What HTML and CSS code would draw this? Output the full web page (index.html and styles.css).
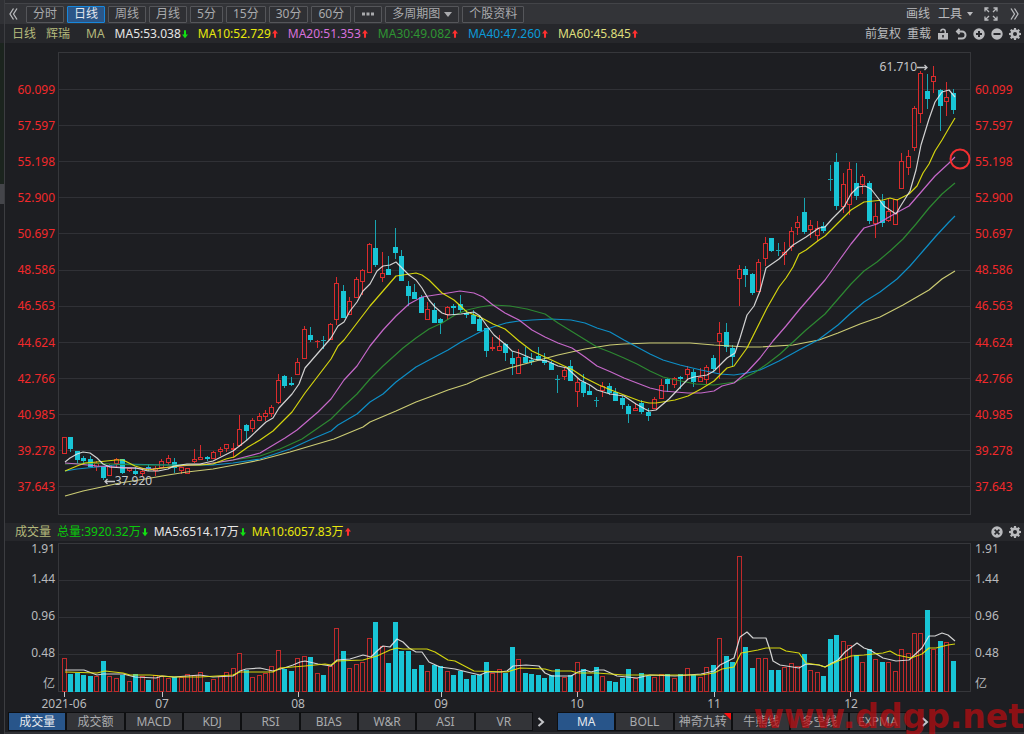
FILE: index.html
```html
<!DOCTYPE html>
<html lang="zh-CN">
<head>
<meta charset="utf-8">
<title>辉瑞 日线</title>
<link rel="stylesheet" href="styles.css">
</head>
<body>
<svg class="defs" aria-hidden="true">
  <symbol id="up" viewBox="0 0 7 11"><path d="M3.5 0.5 7 5H4.7v5H2.3V5H0z"/></symbol>
  <symbol id="down" viewBox="0 0 7 11"><path d="M3.5 10.5 7 6H4.7V1H2.3v5H0z"/></symbol>
  <symbol id="gear" viewBox="0 0 12 12"><path fill-rule="evenodd" d="M5 0h2l.3 1.7.9.4L9.600 1 11 2.400 9.900 3.800l.4.9L12 5v2l-1.700.3-.4.9L11 9.600 9.600 11 8.200 9.900l-.9.4L7 12H5l-.3-1.700-.9-.4L2.400 11 1 9.600l1.100-1.400-.4-.9L0 7V5l1.700-.3.4-.9L1 2.400 2.400 1l1.400 1.100.9-.4zM6 4a2 2 0 1 0 0 4 2 2 0 0 0 0-4z"/></symbol>
</svg>
<div class="app">
  <aside class="rail" id="rail"></aside>
  <main class="panel">
    <nav class="toolbar">
      <button class="bare" aria-label="收起"><svg width="9" height="12" viewBox="0 0 9 12"><path class="stroke" d="M4.500.5 1 6l3.500 5.500M8 .5 4.500 6 8 11.500"/></svg></button>
      <div class="periods">
        <button>分时</button>
        <button class="on">日线</button>
        <button>周线</button>
        <button>月线</button>
        <button>5分</button>
        <button>15分</button>
        <button>30分</button>
        <button>60分</button>
        <button class="more" aria-label="更多"><svg width="12" height="4" viewBox="0 0 12 4"><path d="M0 .5h3v3H0zM4.500.5h3v3h-3zM9 .5h3v3H9z"/></svg></button>
        <button>多周期图<svg class="caret" width="8" height="5" viewBox="0 0 8 5"><path d="M0 0h8L4 5z"/></svg></button>
        <button>个股资料</button>
      </div>
      <div class="tools">
        <button class="bare">画线</button>
        <button class="bare">工具<svg class="caret" width="6" height="4" viewBox="0 0 6 4"><path d="M0 0h6L3 4z"/></svg></button>
        <button class="bare full" aria-label="全屏"><svg width="14" height="14" viewBox="0 0 14 14"><path class="stroke" d="M1 4.500V1h3.500M1 1l4 4M9.500 1H13v3.500M13 1 9 5M1 9.500V13h3.500M1 13l4-4M13 9.500V13H9.500M13 13 9 9"/></svg></button>
        <button class="bare" aria-label="展开"><svg width="9" height="12" viewBox="0 0 9 12"><path class="stroke" d="M1 .5 4.500 6 1 11.500M4.500.5 8 6l-3.500 5.500"/></svg></button>
      </div>
    </nav>
    <header class="legend">
      <span class="olive">日线</span><span class="olive">辉瑞</span><span class="olive ma">MA</span>
      <span class="white">MA5:53.038<svg class="arr fall"><use href="#down"/></svg></span>
      <span class="yellow">MA10:52.729<svg class="arr rise"><use href="#up"/></svg></span>
      <span class="pink">MA20:51.353<svg class="arr rise"><use href="#up"/></svg></span>
      <span class="green">MA30:49.082<svg class="arr rise"><use href="#up"/></svg></span>
      <span class="blue">MA40:47.260<svg class="arr rise"><use href="#up"/></svg></span>
      <span class="khaki">MA60:45.845<svg class="arr rise"><use href="#up"/></svg></span>
      <div class="actions">
        <button class="bare">前复权</button>
        <button class="bare">重载</button>
        <button class="bare icon" aria-label="锁定"><svg width="12" height="12" viewBox="0 0 12 12"><path fill-rule="evenodd" d="M1 5h6.500V3.500a1.500 1.500 0 0 0-3 0H3a3 3 0 0 1 6 0V5h2v6.500H1zM5.200 7v2.500h1.600V7z"/></svg></button>
        <button class="bare icon" aria-label="撤销"><svg width="12" height="12" viewBox="0 0 12 12"><path class="thick" d="M4.500 1 2 3.500 4.500 6M2 3.500h5a3.500 3.500 0 0 1 0 7H3"/></svg></button>
        <button class="bare icon" aria-label="放大"><svg width="12" height="12" viewBox="0 0 12 12"><path fill-rule="evenodd" d="M6 .3a5.700 5.700 0 1 0 0 11.400A5.700 5.700 0 0 0 6 .3zM5 3h2v2h2v2H7v2H5V7H3V5h2z"/></svg></button>
        <button class="bare icon" aria-label="缩小"><svg width="12" height="12" viewBox="0 0 12 12"><path fill-rule="evenodd" d="M6 .3a5.700 5.700 0 1 0 0 11.400A5.700 5.700 0 0 0 6 .3zM2.500 5h7v2h-7z"/></svg></button>
        <button class="bare icon" aria-label="设置"><svg width="12" height="12"><use href="#gear"/></svg></button>
      </div>
    </header>
    <section class="chart price">
      <ol class="scale left" data-scale="price"></ol>
      <div class="plot">
        <svg id="price" viewBox="58 52 913 463" preserveAspectRatio="none"></svg>
        <span class="note high">61.710<svg width="11" height="7" viewBox="0 0 11 7"><path class="stroke" d="M0 3.500h10M7.500 1 10 3.500 7.500 6"/></svg></span>
        <span class="note low"><svg width="11" height="7" viewBox="0 0 11 7"><path class="stroke" d="M11 3.500H1M3.500 1 1 3.500 3.500 6"/></svg>37.920</span>
      </div>
      <ol class="scale" data-scale="price"></ol>
    </section>
    <header class="legend volbar">
      <span class="olive">成交量</span>
      <span class="lime">总量:3920.32万<svg class="arr fall"><use href="#down"/></svg></span>
      <span class="white">MA5:6514.17万<svg class="arr fall"><use href="#down"/></svg></span>
      <span class="yellow">MA10:6057.83万<svg class="arr rise"><use href="#up"/></svg></span>
      <div class="actions">
        <button class="bare icon" aria-label="关闭"><svg width="12" height="12" viewBox="0 0 12 12"><path fill-rule="evenodd" d="M6 .3a5.700 5.700 0 1 0 0 11.400A5.700 5.700 0 0 0 6 .3zM4.200 3 6 4.800 7.800 3 9 4.200 7.200 6 9 7.800 7.800 9 6 7.200 4.200 9 3 7.800 4.800 6 3 4.200z"/></svg></button>
        <button class="bare icon" aria-label="设置"><svg width="12" height="12"><use href="#gear"/></svg></button>
      </div>
    </header>
    <section class="chart volume">
      <ol class="scale left" data-scale="volume"></ol>
      <div class="plot"><svg id="volume" viewBox="58 543 913 154" preserveAspectRatio="none"></svg></div>
      <ol class="scale" data-scale="volume"></ol>
    </section>
    <div class="months">
      <span>2021-06</span><span>07</span><span>08</span><span>09</span><span>10</span><span>11</span><span>12</span>
    </div>
    <nav class="tabs">
      <div class="group nine">
        <button class="on">成交量</button><button>成交额</button><button>MACD</button><button>KDJ</button><button>RSI</button><button>BIAS</button><button>W&amp;R</button><button>ASI</button><button>VR</button>
      </div>
      <button class="bare next" aria-label="更多指标"><svg width="8" height="10" viewBox="0 0 8 10"><path class="thick" d="M1.500 1 6 5 1.500 9"/></svg></button>
      <div class="group six">
        <button class="on">MA</button><button>BOLL</button><button class="hot">神奇九转</button><button>牛熊线</button><button>多空线</button><button>EXPMA</button>
      </div>
      <button class="bare next last" aria-label="更多主图指标"><svg width="8" height="10" viewBox="0 0 8 10"><path class="thick" d="M1.500 1 6 5 1.500 9"/></svg></button>
    </nav>
    <div class="watermark">www.ddgp.net</div>
  </main>
</div>
<script src="chart.js"></script>
</body>
</html>
```
FILE: styles.css
```css
* { box-sizing: border-box; }
body {
  margin: 0;
  background: #1d1e22;
  color: #b9babd;
  font: 12px/16px "Noto Sans", "Noto Sans CJK SC", sans-serif;
}
button {
  font: inherit;
  color: #a9aaad;
  background: none;
  border: 0;
  padding: 0;
  display: flex;
  align-items: center;
  justify-content: center;
  white-space: nowrap;
}
ol { list-style: none; margin: 0; padding: 0; }
svg { display: block; fill: currentColor; flex: none; }
.defs { position: absolute; width: 0; height: 0; }
.stroke { fill: none; stroke: currentColor; stroke-width: 1.3; }
.thick { fill: none; stroke: currentColor; stroke-width: 2; }

.app { display: flex; height: 100vh; min-height: 480px; }
.rail {
  width: 5px;
  border-right: 1px solid #3c3d41;
  background: linear-gradient(#303135 0 24px, #26272b 24px 43px, #1b241e 43px 184px, #44454a 184px 204px, #1d1e22 204px);
}
.panel {
  flex: 1;
  min-width: 0;
  position: relative;
  display: flex;
  flex-direction: column;
}

.toolbar {
  height: 24px;
  flex: none;
  display: flex;
  align-items: center;
  gap: 8px;
  padding: 3px 5px 2px 4px;
  border-top: 3px solid #2c2d31;
  background: #333438;
  box-shadow: inset 0 1px #434448;
}
.toolbar .bare { color: #b9babd; }
.periods { display: flex; gap: 3px; }
.periods button {
  height: 17px;
  padding: 0 6px;
  border: 1px solid #55565a;
  border-radius: 1px;
  background: #2f3034;
}
.periods .on { background: #2b5688; border-color: #1787dc; color: #e4e8ee; }
.periods .more { width: 28px; }
.periods .caret { margin-left: 4px; }
.tools { margin-left: auto; display: flex; align-items: center; gap: 8px; }
.tools .caret { margin-left: 5px; }
.full { margin: 0 4px 0 3px; }

.legend {
  height: 19px;
  flex: none;
  display: flex;
  align-items: center;
  gap: 10px;
  padding: 0 3px 0 7px;
  background: #26272b;
  white-space: nowrap;
}
.legend span { display: flex; align-items: center; }
.legend .ma { margin: 0 0 0 6px; }
.volbar { height: 18px; gap: 6px; padding-left: 10px; }
.arr { width: 6px; height: 10px; margin-left: 1px; }
.rise { color: #ff2f2f; }
.fall { color: #12e012; }
.olive { color: #b4b97c; }
.white { color: #e6e6e6; }
.yellow { color: #e8e80c; }
.pink { color: #d870dc; }
.green { color: #2f9433; }
.blue { color: #0c9ad8; }
.khaki { color: #dede7c; }
.lime { color: #0bc80b; }
.actions { margin-left: auto; display: flex; align-items: center; gap: 6px; }
.actions .bare { color: #b9babd; }

.chart { display: flex; min-height: 0; }
.plot { flex: 1; min-width: 0; position: relative; }
.plot > svg { width: 100%; height: 100%; }
.scale { width: 53px; padding-left: 4px; }
.left { text-align: right; padding: 0 3px 0 0; }
.price { flex: 463 1 0; padding: 9px 0 8px; }
.price .scale {
  display: flex;
  flex-direction: column;
  justify-content: space-between;
  padding-top: 30px;
  padding-bottom: 20px;
  color: #f2292b;
}
.volume { flex: 156 1 0; }
.volume .plot { padding-top: 2px; }
.volume .scale { display: grid; grid-template-rows: 30fr 37fr 37fr 31fr 21fr; }
.note {
  position: absolute;
  display: flex;
  align-items: center;
  color: #c4c5c8;
}
.high { right: 4.7%; top: 1.6%; }
.low { left: 5%; top: 91%; }

.months {
  height: 15px;
  flex: none;
  display: grid;
  grid-template-columns: 98fr 136fr 143fr 136fr 137fr 137fr 120fr;
  padding: 0 53px 0 59px;
  line-height: 14px;
}
.months span { justify-self: start; transform: translateX(-50%); }

.tabs {
  height: 22px;
  flex: none;
  display: flex;
  align-items: flex-start;
  padding: 0 81px 0 3px;
  border-bottom: 2px solid #303135;
}
.group { display: flex; background: #0e0f11; }
.nine { flex: 9 1 0; }
.six { flex: 6 1 0; }
.group button {
  flex: 1 1 0;
  min-width: 0;
  height: 19px;
  border: 1px solid #0e0f11;
  background: #333438;
  position: relative;
}
.group .on { background: #28558a; color: #e4e8ee; }
.hot::after {
  content: "";
  position: absolute;
  top: 0;
  right: 0;
  border: solid transparent;
  border-width: 0 7px 7px 0;
  border-right-color: #ff1010;
}
.next { width: 24px; height: 19px; color: #c4c5c8; padding-right: 9px; }
.last { width: 40px; margin-right: -4px; padding: 0 5px 0 0; }
.watermark {
  position: absolute;
  right: 0;
  bottom: 0;
  color: #bd0c10;
  opacity: .7;
  font: bold 33px/34px "DejaVu Sans", sans-serif;
  pointer-events: none;
}

.grid { stroke: #303136; }
.frame { fill: none; stroke: #36373b; }
.tick { stroke: #c4c5c8; }
.r { fill: #1d1e22; stroke: #d92b2c; }
.c { fill: #18c5d6; stroke: #18c5d6; }
.bar-r { fill: #1d1e22; stroke: #c02a2b; }
.wick-r { stroke: #d92b2c; }
.wick-c { stroke: #18a5b2; }
.line { fill: none; stroke: currentColor; stroke-width: 1.2; stroke-linejoin: round; opacity: .9; }
.ring { fill: none; stroke: #f22f31; stroke-width: 2; }
```
FILE: chart.js
```js
const X0 = 64.3, STEP = 6.49, BASE = 692;

// direction, high, body top, body bottom, low, volume top
const DAYS = `r437 437 454 454 658|c437 437 449 452 674|c451 451 460 464 673|c456 458 461 463 675|c456 459 467 467 676
r461 463 467 471 676|c467 467 478 480 661|r464 465 476 476 676|r458 459 464 468 678|c459 459 473 474 675
r468 468 471 472 681|c467 471 474 475 674|r469 471 474 476 676|c464 467 469 471 680|r466 468 471 476 675
r459 461 468 468 676|r455 458 463 465 678|c458 462 468 473 677|r467 467 471 474 677|r468 468 474 474 674
r449 459 462 463 675|r445 457 460 460 672|c456 457 459 461 682|r451 452 459 459 679|r447 449 452 456 676
r444 444 449 452 672|r443 448 450 458 668|r415 429 446 447 653|c424 425 431 440 670|r418 420 429 432 677
r413 416 421 421 675|r410 413 417 421 673|r405 407 414 417 666|r374 380 403 404 650|c375 376 386 388 669
c377 383 385 386 671|r358 362 375 375 658|r326 329 359 359 656|c327 335 340 342 657|r340 341 342 348 673
c336 340 341 349 675|r323 324 340 340 666|r277 283 320 325 628|c285 291 318 318 651|r297 301 315 315 668
r277 279 298 298 664|r269 270 282 295 662|r243 244 273 273 638|c220 248 265 267 622|r252 273 278 282 646
c256 269 275 275 663|c228 247 253 259 622|c250 256 281 281 651|c281 286 296 306 651|c284 292 299 299 669
c295 297 313 313 665|r302 309 320 320 671|c303 310 323 323 665|c318 319 323 334 666|r306 307 315 320 671
c304 306 308 315 675|c295 304 310 313 671|c310 313 315 318 679|c310 315 324 324 675|c316 319 331 331 675
c328 328 351 357 662|r337 347 349 351 673|r335 346 351 351 669|c343 344 353 361 673|c351 358 364 375 647
r349 357 374 374 659|c347 357 363 363 673|c353 360 362 365 674|c347 356 360 360 675|c353 360 363 365 678
c361 363 370 370 675|c375 379 380 393 669|r368 370 377 380 677|c360 366 381 381 675|r378 382 392 407 662
c374 382 393 397 669|c385 391 395 395 676|c397 400 401 407 667|r382 386 391 397 676|c383 386 393 395 681
c388 392 401 401 682|c396 398 405 409 678|c404 406 414 423 669|r403 408 411 411 678|c400 403 412 414 673
c408 412 416 421 676|r397 399 409 409 677|r379 385 399 399 674|c378 379 384 392 674|r377 378 385 388 678
c376 377 379 389 674|r366 369 375 380 668|c369 372 382 387 675|r368 377 382 382 677|r365 367 380 384 667
c355 358 369 372 665|r322 333 342 379 638|c323 332 347 352 656|c345 348 357 367 662|r265 269 279 306 556
c266 269 275 287 647|c273 274 293 295 668|r259 262 292 292 658|r237 243 259 266 658|c238 238 251 252 670
c243 250 251 256 670|r242 252 255 265 667|r227 231 247 251 663|r216 222 228 235 666|c198 212 232 234 654
r220 225 230 238 670|r221 228 236 241 672|c222 226 231 233 676|c165 179 180 191 639|c153 162 206 210 635
r173 184 207 213 641|r162 169 205 215 645|c163 183 196 200 655|r174 176 185 194 662|c181 183 221 224 649
r203 216 224 238 659|c194 201 223 227 662|r199 211 221 222 662|r199 199 225 225 671|r153 161 189 189 649
r150 156 168 175 653|r106 108 148 151 633|r71 73 114 123 633|c74 91 99 109 610|r66 76 82 93 649
c89 90 106 131 641|r82 97 102 116 642|c89 93 110 114 661`
  .split(/[|\n]/).map(s => [s[0], ...s.slice(1).split(' ').map(Number)]);

const PRICE_LINES = {
  khaki: '65,496 83,491 97,488 120,483 145,479 168,475 187,472 213,469 240,464 260,460 290,452 334,439 363,427 370,422 396,411 416,402 435,395 448,390 467,384 480,378 506,369 532,362 558,355 585,349 610,345 624,344 650,343 690,343 714,345 747,347 760,347 793,345 819,340 838,333 860,324 880,317 903,305 929,290 942,279 955,271',
  blue: '65,471 77,469 97,467 123,464 168,465 213,465 233,463 260,459 290,449 312,439 331,431 338,425 357,414 370,402 383,394 396,382 416,367 429,360 448,350 461,342 480,332 493,327 506,323 519,321 532,320 551,319 571,320 585,323 597,328 610,332 624,340 637,347 650,354 663,360 680,365 701,370 720,374 734,375 747,373 760,370 779,361 799,350 818,340 838,325 851,313 864,302 880,292 897,279 910,266 923,251 936,236 949,222 955,216',
  green: '65,464 90,463 136,465 200,465 233,460 260,456 280,449 302,439 331,419 344,406 357,394 370,379 383,366 403,348 416,338 429,329 442,323 455,315 467,310 480,307 493,305 510,306 527,309 545,314 558,323 571,331 584,339 597,347 610,352 624,358 637,364 650,371 663,377 676,380 696,384 714,385 735,382 754,373 767,364 780,354 793,342 806,330 819,319 825,314 838,299 851,284 864,271 877,262 890,251 903,239 916,224 929,208 942,194 955,183',
  pink: '65,463 78,464 97,466 133,468 153,469 180,466 207,464 233,460 260,453 285,438 297,430 318,412 331,399 344,380 357,366 370,346 383,330 396,316 409,304 422,297 435,295 448,293 460,291 474,293 483,297 493,305 505,313 519,320 532,330 545,337 558,343 572,348 585,357 597,366 611,372 624,378 637,383 650,388 663,391 688,393 701,393 714,391 722,386 734,383 747,372 760,358 773,341 786,326 799,310 812,295 825,280 838,262 851,244 864,228 877,224 896,213 909,206 922,191 935,176 948,164 955,157',
  yellow: '65,471 77,466 85,463 97,462 116,460 123,460 135,466 148,470 162,468 187,465 200,465 213,464 226,459 234,457 248,447 260,440 273,431 292,412 305,393 318,376 331,359 338,346 344,340 357,323 370,306 383,291 396,276 403,275 416,273 422,275 429,280 442,293 454,300 467,312 480,317 493,324 505,329 519,341 532,351 545,357 560,364 573,370 585,378 599,385 611,390 624,395 640,401 649,403 656,403 675,400 688,396 701,389 714,381 727,368 734,366 747,348 753,336 760,322 767,308 779,287 786,278 793,267 799,254 806,250 819,240 825,236 838,223 851,210 864,202 883,200 890,198 897,200 909,194 917,186 923,173 929,164 935,151 942,140 949,128 955,118',
  white: '65,462 70,458 77,454 83,452 90,453 97,458 103,464 110,467 123,468 136,468 148,471 158,471 168,469 174,466 187,464 200,464 213,461 233,451 247,440 266,422 273,418 279,408 292,394 299,384 305,368 318,353 331,338 338,326 344,322 350,311 357,302 363,291 370,284 377,271 383,266 390,265 396,262 403,269 409,275 416,280 422,288 429,300 435,307 442,313 448,315 461,314 474,312 480,316 487,326 494,335 506,345 512,351 519,353 533,359 547,361 558,366 567,368 580,380 590,385 597,390 610,394 624,396 636,404 645,409 649,411 656,410 669,399 688,379 694,377 707,375 714,371 720,365 727,358 735,353 740,338 747,315 754,306 760,291 766,268 779,259 793,245 806,237 819,228 825,227 832,219 844,207 851,194 858,187 865,186 871,189 878,198 884,206 896,214 900,207 910,191 916,170 921,145 929,119 935,102 942,92 949,90 955,97'
};

const VOLUME_LINES = {
  white: '65,670 84,670 97,675 103,674 123,674 135,677 156,678 162,676 174,677 187,676 200,675 213,677 233,676 240,671 246,669 260,668 273,671 284,668 293,665 300,662 305,661 318,664 331,666 337,660 350,659 363,655 371,657 377,651 383,646 390,647 397,639 403,642 409,648 416,652 422,652 429,662 440,667 455,669 467,672 480,675 487,672 500,672 507,671 513,666 526,665 539,666 545,673 552,676 571,676 578,672 585,670 591,672 598,670 604,670 617,676 637,678 650,675 675,676 701,674 714,671 720,665 728,661 734,658 740,637 747,632 753,638 766,638 770,650 773,661 780,665 799,668 806,664 819,665 825,667 832,663 838,660 845,652 857,643 864,648 870,650 883,658 896,661 909,660 922,648 929,636 935,636 942,633 948,635 955,641',
  yellow: '65,672 97,673 105,671 123,673 130,675 150,675 174,677 200,677 233,675 240,672 273,672 280,668 305,666 325,664 331,665 337,661 363,660 377,656 390,650 397,648 403,649 427,649 435,652 448,660 455,661 474,671 507,672 520,668 545,669 552,671 571,671 578,673 597,673 624,675 650,675 701,675 714,673 722,669 734,667 741,653 747,652 758,650 766,648 780,648 786,651 799,653 806,663 819,665 825,667 838,661 851,656 864,655 883,653 890,651 897,655 911,658 922,654 929,648 936,648 948,645 955,644'
};

const SCALES = {
  price: ['60.099', '57.597', '55.198', '52.900', '50.697', '48.586', '46.563', '44.624', '42.766', '40.985', '39.278', '37.643'],
  volume: ['1.91', '1.44', '0.96', '0.48', '亿']
};

const line = (cls, x1, y1, x2, y2) => `<path class="${cls}" d="M${x1} ${y1}L${x2} ${y2}"/>`;
const rect = (cls, x, y, w, h) => `<rect class="${cls}" x="${x}" y="${y}" width="${w}" height="${h}"/>`;
const lines = set => Object.entries(set).map(([k, p]) => `<polyline class="line ${k}" points="${p}"/>`).join('');

let price = rect('frame', 58.5, 52.5, 912, 462);
for (let k = 0; k < 12; k++) price += line('grid', 59, Math.round(90 + k * 36.1) - 0.5, 970, Math.round(90 + k * 36.1) - 0.5);
let volume = rect('frame', 58.5, 543.5, 912, 148);
for (const y of [580.5, 617.5, 654.5]) volume += line('grid', 59, y, 970, y);

DAYS.forEach(([dir, high, top, bottom, low, vol], i) => {
  const x = Math.round(X0 + i * STEP - 0.5) + 0.5;
  price += line('wick-' + dir, x, high, x, top) + line('wick-' + dir, x, bottom, x, low);
  price += bottom - top < 2
    ? line('wick-' + dir, x - 2.5, top + 0.5, x + 2.5, top + 0.5)
    : rect(dir, x - 2, top + 0.5, 4, bottom - top - 1);
  volume += rect(dir === 'r' ? 'bar-r' : 'c', x - 2, vol + 0.5, 4, BASE - vol - 1);
});

for (const x of [64.5, 162.5, 298.5, 441.5, 577.5, 714.5, 850.5]) volume += line('tick', x, 692, x, 697);
price += lines(PRICE_LINES) + '<circle class="ring" cx="960" cy="159" r="9.500"/>';
volume += lines(VOLUME_LINES);

document.getElementById('price').innerHTML = price;
document.getElementById('volume').innerHTML = volume;
document.querySelectorAll('[data-scale]').forEach(el => {
  el.innerHTML = SCALES[el.dataset.scale].map(t => `<li>${t}</li>`).join('');
});
```
